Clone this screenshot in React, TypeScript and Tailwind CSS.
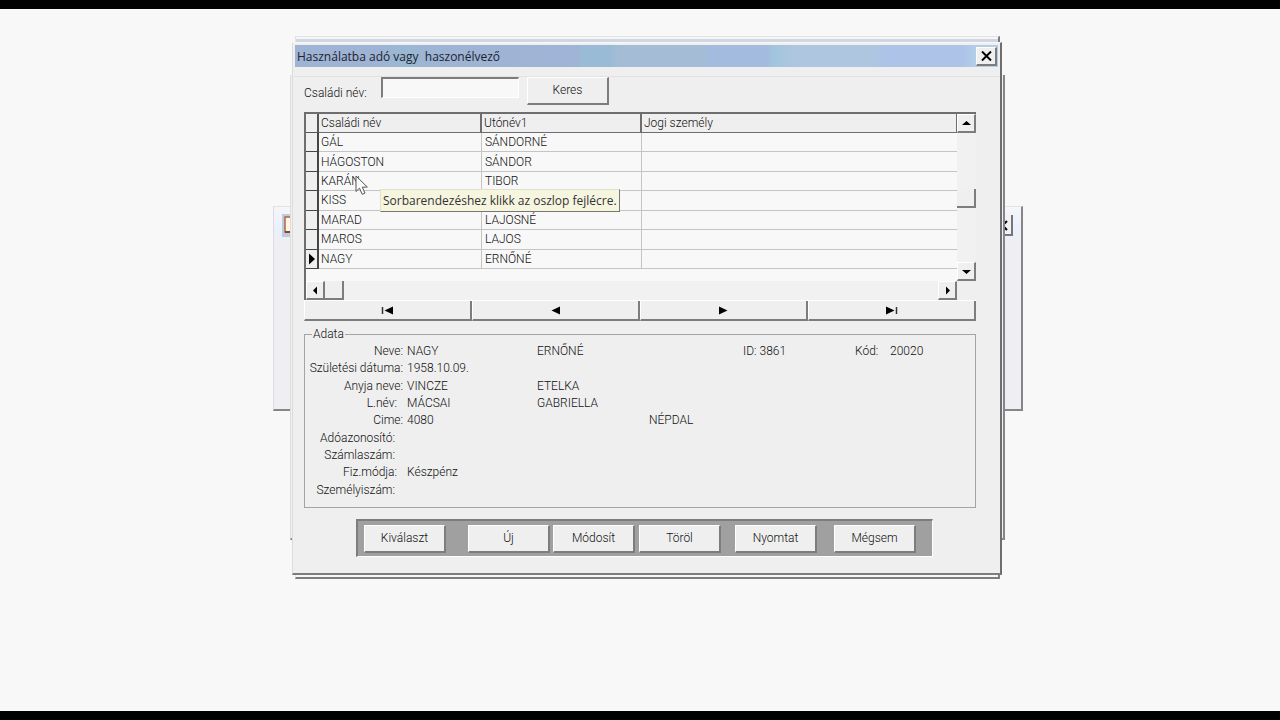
import { useState } from 'react';
import type { ReactNode } from 'react';
import clsx from 'clsx';

interface Person {
  family: string;
  given: string;
  legal: string;
}

interface DetailRow {
  label: string;
  pad: string;
  value?: string;
  second?: string;
  street?: string;
  id?: string;
  code?: string;
}

const people: Person[] = [
  { family: 'GÁL', given: 'SÁNDORNÉ', legal: '' },
  { family: 'HÁGOSTON', given: 'SÁNDOR', legal: '' },
  { family: 'KARÁN', given: 'TIBOR', legal: '' },
  { family: 'KISS', given: '', legal: '' },
  { family: 'MARAD', given: 'LAJOSNÉ', legal: '' },
  { family: 'MAROS', given: 'LAJOS', legal: '' },
  { family: 'NAGY', given: 'ERNŐNÉ', legal: '' },
];

const details: DetailRow[] = [
  { label: 'Neve:', pad: 'pr-0', value: 'NAGY', second: 'ERNŐNÉ', id: '3861', code: '20020' },
  { label: 'Születési dátuma:', pad: 'pr-0', value: '1958.10.09.' },
  { label: 'Anyja neve:', pad: 'pr-0', value: 'VINCZE', second: 'ETELKA' },
  { label: 'L.név:', pad: 'pr-1.5', value: 'MÁCSAI', second: 'GABRIELLA' },
  { label: 'Cime:', pad: 'pr-0', value: '4080', street: 'NÉPDAL' },
  { label: 'Adóazonosító:', pad: 'pr-2' },
  { label: 'Számlaszám:', pad: 'pr-2' },
  { label: 'Fiz.módja:', pad: 'pr-1.5', value: 'Készpénz' },
  { label: 'Személyiszám:', pad: 'pr-2' },
];

const raised = 'bg-[#efefef] border-t border-l border-r-2 border-b-2 border-t-white border-l-white border-r-[#7d7d7d] border-b-[#7d7d7d]';

const arrows = {
  up: 'M1 7 L5.5 3 L10 7 Z',
  down: 'M1 4 L5.5 8 L10 4 Z',
  left: 'M7 1.5 L3 5.5 L7 9.5 Z',
  right: 'M4 1.5 L8 5.5 L4 9.5 Z',
};

function ScrollButton({ dir, label }: { dir: keyof typeof arrows; label: string }) {
  return (
    <button aria-label={label} className={clsx('flex size-[19px] shrink-0 items-center justify-center', raised)}>
      <svg width="11" height="11" viewBox="0 0 11 11">
        <path d={arrows[dir]} fill="#000" />
      </svg>
    </button>
  );
}

function NavButton({ label, children }: { label: string; children: ReactNode }) {
  return (
    <button
      aria-label={label}
      className="flex h-5 flex-1 items-center justify-center border-r-2 border-b-2 border-l border-r-[#7d7d7d] border-b-[#7d7d7d] border-l-white bg-[#efefef]"
    >
      <svg width="13" height="9" viewBox="0 0 13 9">
        {children}
      </svg>
    </button>
  );
}

function PushButton({ children, className }: { children: ReactNode; className?: string }) {
  return <button className={clsx('h-7 w-[82px] text-center', raised, className)}>{children}</button>;
}

function BackWindows() {
  return (
    <>
      <div className="absolute top-[197px] right-[257px] left-[273px] h-[205px] border-t border-r-2 border-b-2 border-l border-t-[#e4e4e8] border-r-[#85858a] border-b-[#85858a] border-l-[#dcdce2] bg-[#efeff3]">
        <div className="flex h-9 items-center justify-between bg-[linear-gradient(180deg,#f5f6f9,#eaf0fb_60%,#efeff3)] pr-2 pl-2">
          <svg width="20" height="23" viewBox="0 0 20 23">
            <rect width="20" height="23" fill="#bccbe2" />
            <rect x="3" y="3" width="14" height="15" fill="#fff6e4" stroke="#b4653f" strokeWidth="1.5" />
            <path d="M3 18h14" stroke="#8a4526" strokeWidth="2" />
          </svg>
          <svg width="20" height="21" viewBox="0 0 20 21">
            <rect width="20" height="21" fill="#f2f2f2" />
            <path d="M19 0V20H0" fill="none" stroke="#75757a" strokeWidth="2" />
            <path d="M5 6l9 9M14 6l-9 9" stroke="#000" strokeWidth="2" />
          </svg>
        </div>
      </div>
      <div className="absolute top-[66px] right-[275px] left-[290px] h-[465px] border-r-2 border-b-2 border-l border-r-[#85858a] border-b-[#85858a] border-l-[#dedede] bg-[#f0f0f0]" />
      <div className="absolute top-[27px] right-[280px] left-[295px] h-[543px] border-t border-r-2 border-b-2 border-l border-t-[#e2e2e2] border-r-[#7d7d7d] border-b-[#7d7d7d] border-l-[#e2e2e2] bg-[#f6f6f6]">
        <div className="mt-0.5 h-[3px] bg-[#cfd8e2]" />
      </div>
    </>
  );
}

function PersonGrid() {
  const [selected, setSelected] = useState('NAGY');

  return (
    <div className="border-t-2 border-l-2 border-[#6e6e6e]">
      <div className="flex">
        <div className="h-[167px] flex-1 bg-[#f8f8f8]">
          <table className="h-[155px] w-full table-fixed border-separate border-spacing-0 text-left">
            <colgroup>
              <col className="w-[13px]" />
              <col className="w-[163px]" />
              <col className="w-[160px]" />
              <col />
            </colgroup>
            <thead className="bg-[#efefef]">
              <tr className="h-[19px]">
                <th className="border-r-2 border-b border-[#555] p-0" />
                <th className="border-r-2 border-b border-[#6e6e6e] p-0 pt-px pl-0.5 font-light">Családi név</th>
                <th className="border-r-2 border-b border-[#6e6e6e] p-0 pt-px pl-0.5 font-light">Utónév1</th>
                <th className="border-r border-b border-[#6e6e6e] p-0 pt-px pl-0.5 font-light">Jogi személy</th>
              </tr>
            </thead>
            <tbody>
              {people.map((p) => (
                <tr key={p.family} onClick={() => setSelected(p.family)}>
                  <td className="border-r-2 border-b border-[#444] bg-[#efefef] p-0">
                    {selected === p.family && (
                      <svg width="9" height="12" viewBox="0 0 9 12" className="ml-0.5 block">
                        <path d="M1 0.5 L7 6 L1 11.5 Z" fill="#000" />
                      </svg>
                    )}
                  </td>
                  <td className="border-r border-b border-[#c4c4c4] p-0 pt-px pl-0.5">{p.family}</td>
                  <td className="border-r border-b border-[#c4c4c4] p-0 pt-px pl-[3px]">{p.given}</td>
                  <td className="border-b border-[#c4c4c4] p-0">{p.legal}</td>
                </tr>
              ))}
            </tbody>
          </table>
        </div>
        <div className="flex w-[19px] flex-col bg-[#f1f1f1]">
          <ScrollButton dir="up" label="Fel" />
          <div className="mt-14 mb-auto h-[19px] border-r-2 border-b-2 border-[#7d7d7d] bg-[#efefef]" />
          <ScrollButton dir="down" label="Le" />
        </div>
      </div>
      <div className="flex">
        <div className="flex flex-1 bg-[#f1f1f1]">
          <ScrollButton dir="left" label="Balra" />
          <div className="h-[19px] w-[19px] border-r-2 border-b-2 border-[#7d7d7d] bg-[#efefef]" />
          <div className="flex-1" />
          <ScrollButton dir="right" label="Jobbra" />
        </div>
        <div className="w-[19px] bg-[#efefef]" />
      </div>
    </div>
  );
}

function Navigator() {
  return (
    <div className="flex border-t border-white">
      <NavButton label="Első">
        <path d="M1.5 1v7" stroke="#333" strokeWidth="1.5" />
        <path d="M12 0.5 L3.5 4.5 L12 8.5 Z" fill="#000" />
      </NavButton>
      <NavButton label="Előző">
        <path d="M11 0.5 L2.5 4.5 L11 8.5 Z" fill="#000" />
      </NavButton>
      <NavButton label="Következő">
        <path d="M2 0.5 L10.5 4.5 L2 8.5 Z" fill="#000" />
      </NavButton>
      <NavButton label="Utolsó">
        <path d="M1 0.5 L9.5 4.5 L1 8.5 Z" fill="#000" />
        <path d="M11.5 1v7" stroke="#333" strokeWidth="1.5" />
      </NavButton>
    </div>
  );
}

function Details() {
  return (
    <fieldset className="mt-[5px] border border-[#a4a4a4] pb-2">
      <legend className="ml-[7px] h-4 px-px leading-4">Adata</legend>
      <div className="mt-px grid h-[156px] grid-rows-9">
        {details.map((d) => (
          <div key={d.label} className="grid grid-cols-[98px_4px_130px_112px_94px_112px_35px_1fr] items-center">
            <span className={clsx('text-right whitespace-nowrap', d.pad)}>{d.label}</span>
            <span />
            <span>{d.value}</span>
            <span>{d.second}</span>
            <span>{d.street}</span>
            <span>{d.id && `ID: ${d.id}`}</span>
            <span>{d.code && 'Kód:'}</span>
            <span>{d.code}</span>
          </div>
        ))}
      </div>
    </fieldset>
  );
}

function Dialog() {
  const [name, setName] = useState('');

  return (
    <section className="absolute top-[33px] right-[278px] left-[292px] border-t border-r-2 border-b-2 border-l border-t-[#f8f8f8] border-r-[#6e6e6e] border-b-[#7d7d7d] border-l-[#dcdcdc] bg-[#efefef]">
      <header className="mx-0.5 mt-0.5 flex h-[22px] items-center justify-between bg-[linear-gradient(90deg,#9fb3d4_0%,#9fb3d4_12%,#99b8d3_15%,#9fb3d4_22%,#9fb4d6_40%,#9abbd6_41%,#9abbd6_45%,#a5bcd6_46%,#a5bcd6_58%,#a3bbde_59%,#a3bbde_67%,#a2c5dd_68%,#aec6e0_71%,#aec6e0_82%,#adc4e8_84%,#adc4e8_95%,#b3cfe8_97%)] pr-px pl-0.5">
        <h1 className="font-['Open_Sans','Noto_Sans',sans-serif] text-[12px] font-normal whitespace-pre text-[#1c2430]">
          Használatba adó vagy{'  '}haszonélvező
        </h1>
        <button aria-label="Bezárás" className={clsx('flex h-[19px] w-[21px] items-center justify-center', raised)}>
          <svg width="11" height="10" viewBox="0 0 11 10">
            <path d="M1 0.5l9 9M10 0.5l-9 9" stroke="#000" strokeWidth="2" />
          </svg>
        </button>
      </header>

      <div className="mt-[9px] border-t border-[#e2e2e2] pr-6 pb-4 pl-[11px]">
        <form className="flex h-[35px] items-start" onSubmit={(e) => e.preventDefault()}>
          <label htmlFor="family" className="mt-[9px] w-[77px]">
            Családi név:
          </label>
          <input
            id="family"
            value={name}
            onChange={(e) => setName(e.target.value)}
            className="h-[21px] w-[138px] border-t-2 border-r border-b border-l-2 border-t-[#7d7d7d] border-r-white border-b-white border-l-[#7d7d7d] bg-[#f8f8f8] px-1 outline-none"
          />
          <PushButton className="ml-2">Keres</PushButton>
        </form>

        <PersonGrid />
        <Navigator />
        <Details />

        <div className="mr-[43px] ml-[52px] mt-[11px] flex h-[38px] items-center border-t-2 border-r border-b border-l-2 border-t-[#7d7d7d] border-r-white border-b-white border-l-[#7d7d7d] bg-[#a0a0a0] pl-1.5">
          <PushButton>Kiválaszt</PushButton>
          <PushButton className="ml-[22px]">Új</PushButton>
          <PushButton className="ml-[3px]">Módosít</PushButton>
          <PushButton className="ml-1">Töröl</PushButton>
          <PushButton className="ml-[14px]">Nyomtat</PushButton>
          <PushButton className="ml-[17px]">Mégsem</PushButton>
        </div>
      </div>
    </section>
  );
}

export default function App() {
  return (
    <div className="flex min-h-screen flex-col bg-[#f8f8f8] font-[Roboto,sans-serif] text-[12px] leading-[15px] font-light text-[#111]">
      <div className="h-[9px] bg-black" />
      <main className="relative flex-1">
        <BackWindows />
        <Dialog />
        <div
          role="tooltip"
          className="absolute top-[180px] left-[380px] border border-[#e2e2cc] border-r-[#77776e] border-b-[#77776e] bg-[#f6f6e0] px-0.5 font-['Open_Sans','Noto_Sans',sans-serif] text-[12px] leading-[21px] font-normal whitespace-nowrap text-[#333]"
        >
          Sorbarendezéshez klikk az oszlop fejlécre.
        </div>
        <svg className="absolute top-[166px] left-[355px]" width="14" height="21" viewBox="0 0 14 21">
          <path d="M1 1 L1 16.5 L4.5 13.2 L7.2 19.3 L10 18.1 L7.3 12.2 L12.3 12 Z" fill="#fafafa" stroke="#555" strokeWidth="1" />
        </svg>
      </main>
      <div className="h-[9px] bg-black" />
    </div>
  );
}
